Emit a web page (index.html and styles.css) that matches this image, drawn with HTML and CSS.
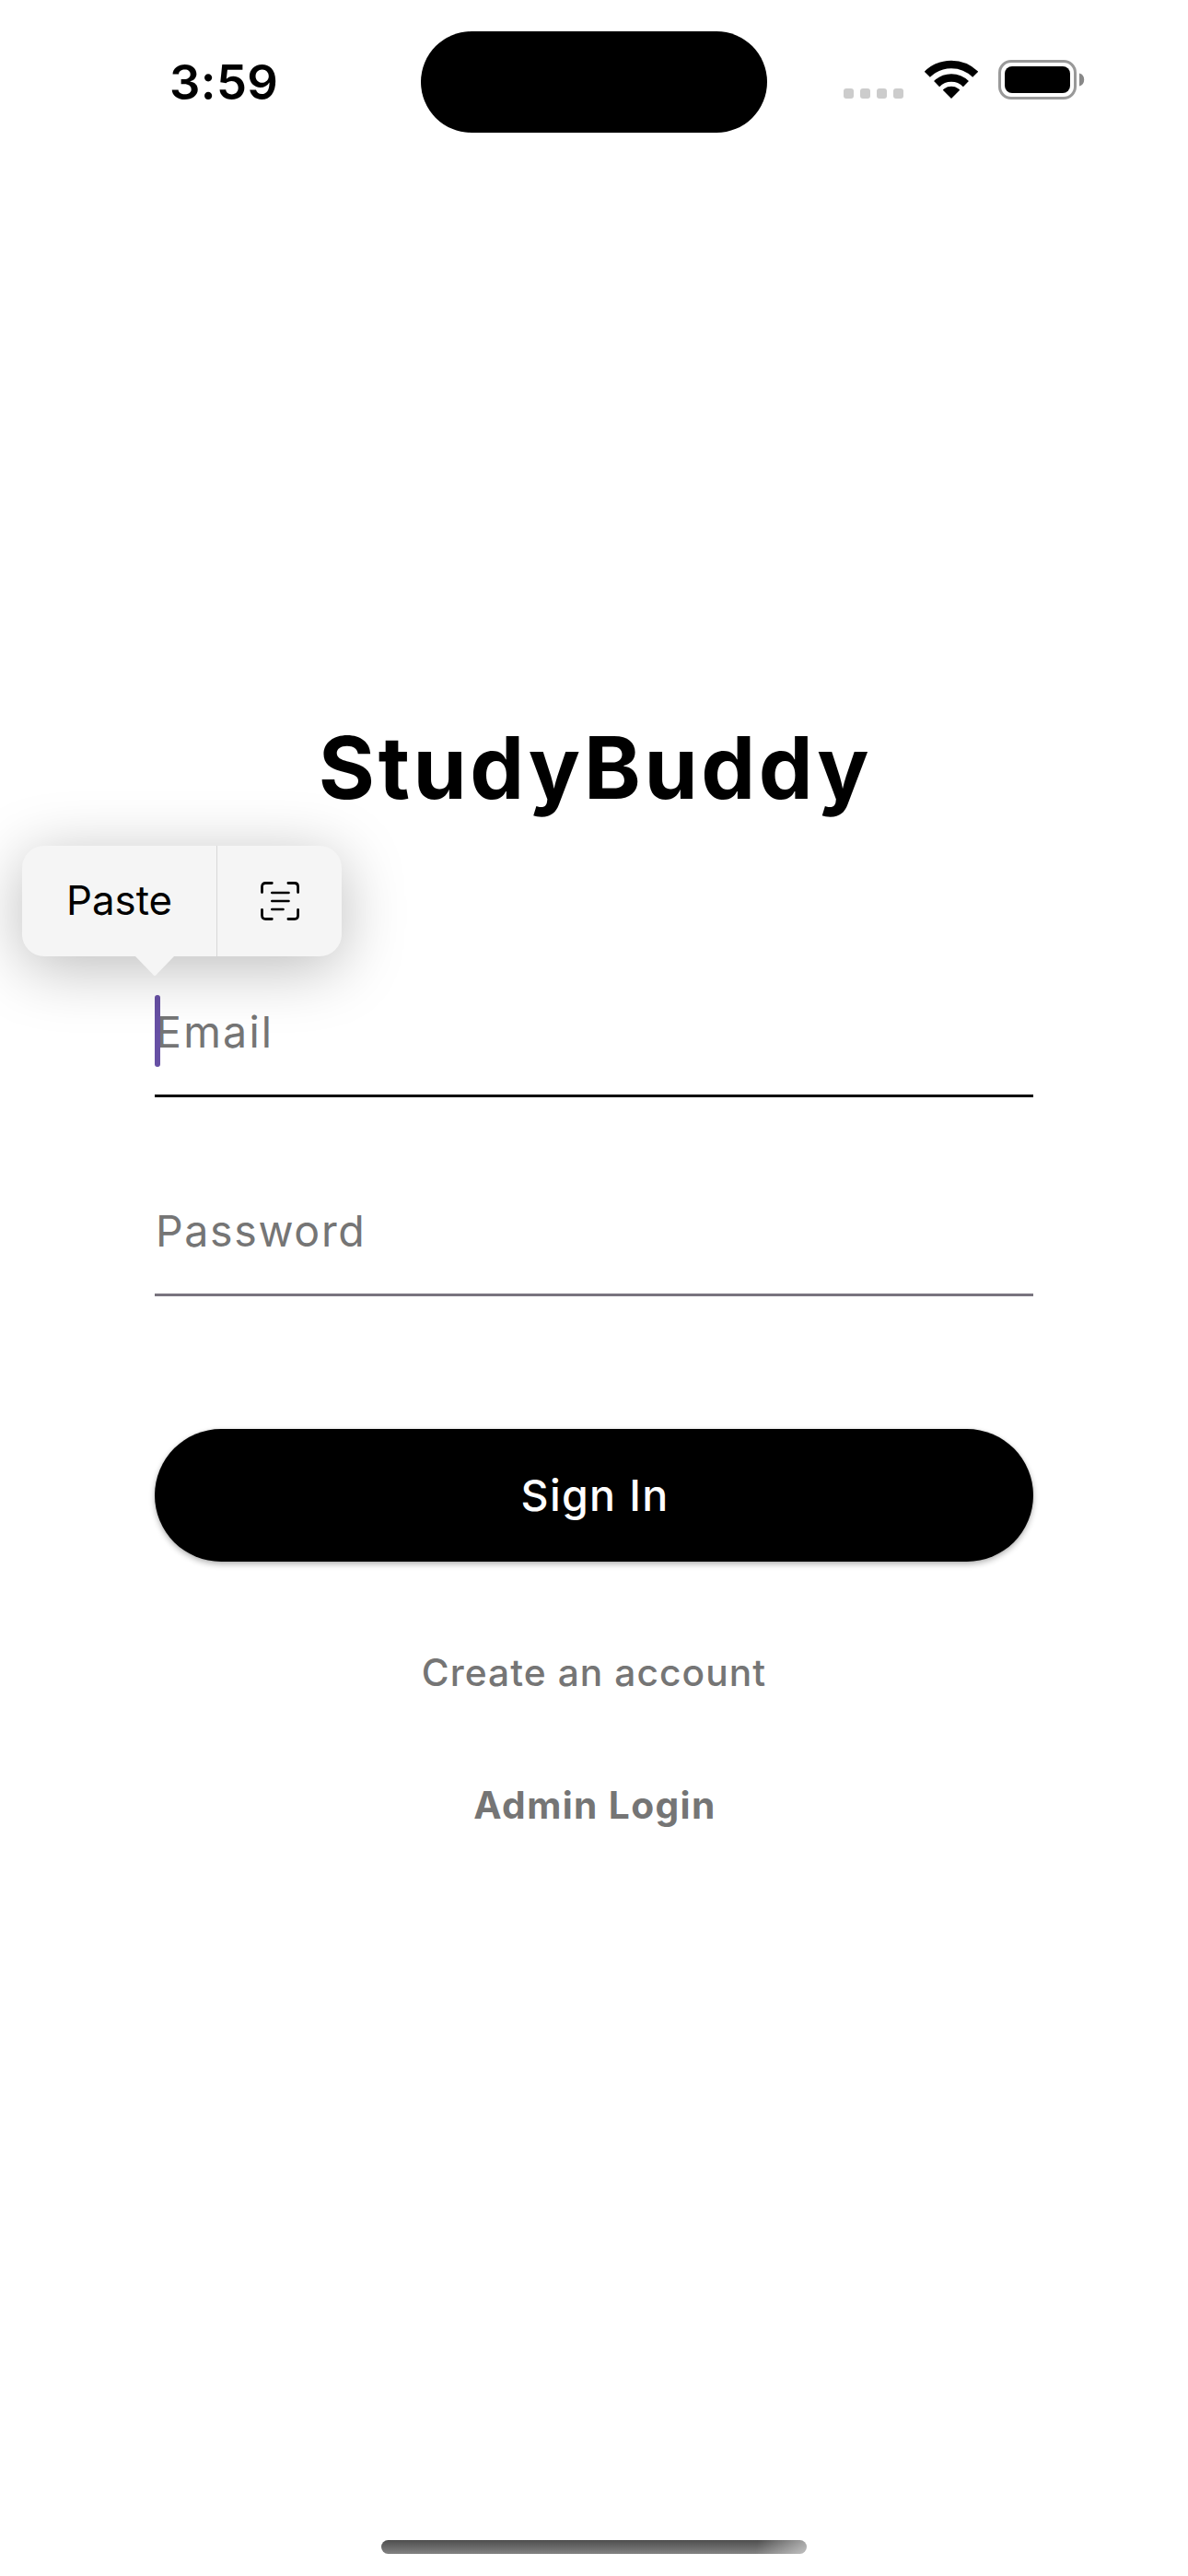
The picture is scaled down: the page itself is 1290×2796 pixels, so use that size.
FILE: index.html
```html
<!DOCTYPE html>
<html lang="en">
<head>
<meta charset="utf-8">
<title>StudyBuddy</title>
<link rel="stylesheet" href="styles.css">
</head>
<body>
<div class="screen">
  <header class="status-bar">
    <span class="time">3:59</span>
    <div class="island"></div>
    <div class="indicators">
      <div class="cellular"><i></i><i></i><i></i><i></i></div>
      <svg class="wifi" viewBox="0 0 58 43" width="58" height="43">
        <path d="M2.8 15.8A37 37 0 0 1 55.2 15.8" fill="none" stroke="#000" stroke-width="8.6"/>
        <path d="M13.1 26.1A22.5 22.5 0 0 1 44.9 26.1" fill="none" stroke="#000" stroke-width="8.6"/>
        <path d="M29 42L19.8 32.8Q20.4 32 21.4 31.3A13 13 0 0 1 36.6 31.3Q37.6 32 38.2 32.8Z"/>
      </svg>
      <svg class="battery" viewBox="0 0 94 43" width="94" height="43">
        <rect x="1.5" y="1.5" width="82" height="40" rx="12.5" fill="none" stroke="#999" stroke-width="3"/>
        <rect x="7" y="7" width="71" height="29" rx="8"/>
        <path d="M88 14.5C91.5 15.5 93.2 18 93.2 21.5S91.5 27.5 88 28.5Z" fill="#888"/>
      </svg>
    </div>
  </header>

  <main class="login">
    <h1 class="title">StudyBuddy</h1>
    <div class="field field-active">
      <span class="placeholder email">Email</span>
      <span class="caret"></span>
    </div>
    <div class="field">
      <span class="placeholder">Password</span>
    </div>
    <button class="sign-in">Sign In</button>
    <a class="link">Create an account</a>
    <a class="link admin">Admin Login</a>
  </main>

  <div class="home-indicator"></div>

  <div class="edit-menu">
    <span class="paste">Paste</span>
    <span class="scan">
      <svg viewBox="0 0 42 42" width="42" height="42" fill="none" stroke="#000" stroke-width="2.8" stroke-linecap="round">
        <path d="M1.5 11.5V5.5Q1.5 1.5 5.5 1.5H12.3M29.9 1.5H36.7Q40.6 1.5 40.6 5.5V11.5M40.6 30.5V36.5Q40.6 40.5 36.7 40.5H29.9M12.3 40.5H5.5Q1.5 40.5 1.5 36.5V30.5"/>
        <path d="M12.3 12H30.5M12.3 21H30.5M12.3 30H24.5" stroke-width="2.6"/>
      </svg>
    </span>
    <svg class="arrow" viewBox="0 0 42 22" width="42" height="22"><path d="M0 0H42L22 20.8Q21 21.7 20 20.8Z" fill="#f5f5f5"/></svg>
  </div>
</div>
</body>
</html>
```
FILE: styles.css
```css
* { box-sizing: border-box; }

body {
  margin: 0;
  background: #fff;
  color: #000;
  font-family: Inter, "Liberation Sans", sans-serif;
}

.screen {
  position: relative;
  display: flex;
  flex-direction: column;
  width: 1290px;
  height: 2796px;
  padding-bottom: 24px;
  overflow: hidden;
}

.status-bar {
  display: grid;
  grid-template-columns: 457px 376px 1fr;
  align-items: center;
  height: 177px;
}

.time {
  padding-left: 184px;
  font-size: 52.5px;
  font-weight: 600;
  line-height: 60px;
  letter-spacing: 0.4px;
}

.island {
  height: 110px;
  margin-top: 1px;
  border-radius: 55px;
  background: #000;
}

.indicators {
  display: flex;
  align-items: flex-end;
  padding: 0 0 4px 83px;
}

.cellular {
  display: flex;
  gap: 7px;
  padding-bottom: 1px;
}

.cellular i {
  width: 11px;
  height: 11px;
  border-radius: 3px;
  background: #ccc;
}

.wifi { margin: 0 22px 0 23px; }

.login {
  display: flex;
  flex-direction: column;
  padding: 596px 168px 0;
}

.title {
  margin: 0 0 197px;
  padding-left: 3px;
  font-size: 93.5px;
  font-weight: 700;
  line-height: 120px;
  letter-spacing: 3.6px;
  text-align: center;
}

.field {
  position: relative;
  height: 101px;
  margin-bottom: 115px;
  border-bottom: 3px solid #79747e;
}

.field + .sign-in { margin-top: 29px; }

.field-active { border-color: #000; }

.placeholder {
  display: block;
  padding-left: 1px;
  color: #757575;
  font-size: 46.5px;
  line-height: 60px;
  letter-spacing: 1.65px;
}

.email { letter-spacing: 2.2px; }

.caret {
  position: absolute;
  top: -10px;
  left: 0;
  width: 6px;
  height: 78px;
  border-radius: 3px;
  background: #6750a4;
}

.sign-in {
  height: 144px;
  margin-bottom: 91px;
  padding: 0 0 0 2px;
  border: 0;
  border-radius: 72px;
  background: #000;
  box-shadow: 0 3px 6px rgba(0, 0, 0, 0.28), 0 0 3px rgba(0, 0, 0, 0.1);
  color: #fff;
  font-family: inherit;
  font-size: 46.5px;
  font-weight: 450;
  letter-spacing: 1.33px;
}

.link {
  height: 60px;
  margin-bottom: 84px;
  color: #757575;
  font-size: 40.7px;
  font-weight: 450;
  line-height: 60px;
  letter-spacing: 1.06px;
  text-align: center;
}

.admin {
  padding-left: 2px;
  font-weight: 700;
  letter-spacing: 1.38px;
}

.home-indicator {
  width: 462px;
  height: 15px;
  margin: auto auto 0;
  border-radius: 8px;
  background:
    linear-gradient(100deg, transparent 88%, rgba(255, 255, 255, 0.5) 100%),
    linear-gradient(#4e4e4e, #828282);
}

.edit-menu {
  position: absolute;
  top: 918px;
  left: 24px;
  display: flex;
  width: 347px;
  height: 120px;
  border-radius: 24px;
  background: #f5f5f5;
  box-shadow: 0 12px 68px rgba(0, 0, 0, 0.27);
}

.paste {
  width: 212px;
  padding-left: 48px;
  border-right: 1px solid #d8d8d8;
  font-size: 43.8px;
  line-height: 119px;
}

.scan {
  display: flex;
  flex: 1;
  align-items: center;
  padding-left: 47px;
}

.arrow {
  position: absolute;
  top: 119.5px;
  left: 123px;
}
```
